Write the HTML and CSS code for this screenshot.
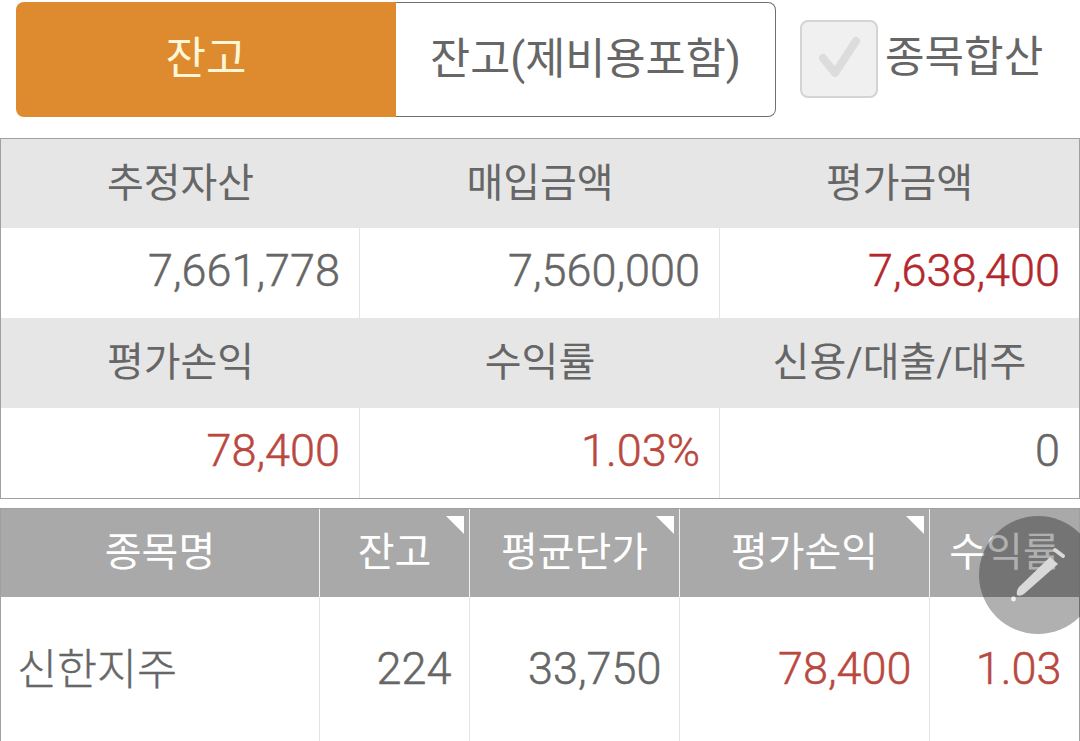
FILE: index.html
```html
<!DOCTYPE html>
<html lang="ko">
<head>
<meta charset="utf-8">
<title>잔고</title>
<link rel="stylesheet" href="styles.css">
</head>
<body>
<main class="page">
  <div class="top">
    <div class="toggle">
      <div class="tab tab-on">잔고</div>
      <div class="tab tab-off">잔고(제비용포함)</div>
    </div>
    <div class="check">
      <span class="box">
        <svg class="tick" viewBox="0 0 78 78" width="78" height="78"><path d="M23 38 L35 53 L56 21" fill="none" stroke="#dcdcdc" stroke-width="8" stroke-linecap="round" stroke-linejoin="round"/></svg>
      </span>
      <span class="check-label">종목합산</span>
    </div>
  </div>

  <section class="summary">
    <div class="s-head">추정자산</div><div class="s-head">매입금액</div><div class="s-head">평가금액</div>
    <div class="s-val">7,661,778</div><div class="s-val">7,560,000</div><div class="s-val red-strong">7,638,400</div>
    <div class="s-head">평가손익</div><div class="s-head">수익률</div><div class="s-head">신용/대출/대주</div>
    <div class="s-val red">78,400</div><div class="s-val red">1.03%</div><div class="s-val">0</div>
  </section>

  <section class="list">
    <div class="l-head">종목명</div>
    <div class="l-head sort">잔고</div>
    <div class="l-head sort">평균단가</div>
    <div class="l-head sort">평가손익</div>
    <div class="l-head">수익률</div>
    <div class="l-cell name">신한지주</div>
    <div class="l-cell">224</div>
    <div class="l-cell">33,750</div>
    <div class="l-cell red">78,400</div>
    <div class="l-cell red">1.03</div>
  </section>

  <div class="fab">
    <svg viewBox="0 0 118 118" width="118" height="118">
      <path d="M71 41 L79 48 L45 78 Q41 81 38 79 Q37 75 40 71 Z" fill="#d9d9d9"/>
      <path d="M76 34 L84 40" fill="none" stroke="#d9d9d9" stroke-width="4" stroke-linecap="round"/>
      <circle cx="34.5" cy="83" r="2.4" fill="#f2f2f2"/>
    </svg>
  </div>
</main>
</body>
</html>
```
FILE: styles.css
```css
* { box-sizing: border-box; }
html, body { margin: 0; padding: 0; background: #fff; }
body { font-family: Roboto, "Noto Sans CJK KR", sans-serif; color: #666; }
.page { position: relative; width: 1080px; height: 741px; overflow: hidden; }

.top { display: flex; align-items: flex-start; height: 138px; padding: 2px 0 0 16px; }
.toggle { display: flex; width: 760px; height: 115px; }
.tab { display: flex; align-items: center; justify-content: center; font-size: 44px; padding-bottom: 10px; }
.tab-on { flex: 0 0 380px; background: #dd8b2e; color: #fff6d8; border-radius: 8px 0 0 8px; }
.tab-off { flex: 1; font-size: 43.6px; border: 1px solid #707070; border-left: 0; border-radius: 0 8px 8px 0; }

.check { display: flex; align-items: flex-start; margin-left: 24px; padding-top: 18px; }
.box { display: block; width: 78px; height: 78px; border: 2px solid #d4d4d4; border-radius: 8px; background: #f0f0f0; }
.tick { display: block; margin: -2px; }
.check-label { font-size: 43px; line-height: 74px; margin-left: 7px; }

.summary { display: grid; grid-template-columns: 359px 360px 1fr; grid-template-rows: 89px 90px 90px 90px; height: 361px; border: 1px solid #a0a0a0; }
.s-head { background: #e6e6e6; display: flex; align-items: center; justify-content: center; font-size: 40px; padding-bottom: 8px; }
.s-val { display: flex; align-items: center; justify-content: flex-end; font-size: 45px; font-weight: 300; -webkit-text-stroke: 0.5px currentColor; padding: 0 19px 6px 0; border-right: 1px solid #e4e4e4; }
.s-val:nth-child(3n) { border-right: 0; }
.red { color: #b9483f; }
.red-strong { color: #b3282c; }

.list { display: grid; grid-template-columns: 319px 150px 210px 250px 1fr; grid-template-rows: 88px 200px; margin-top: 9px; border-top: 1px solid #a0a0a0; border-left: 1px solid #a0a0a0; border-right: 1px solid #a0a0a0; }
.l-head { position: relative; background: #a9a9a9; color: #fff; display: flex; align-items: center; justify-content: center; font-size: 40px; padding-bottom: 8px; border-right: 1px solid #f2f2f2; }
.l-head:nth-child(5) { border-right: 0; }
.sort::after { content: ""; position: absolute; top: 7px; right: 5px; border-style: solid; border-width: 0 18px 18px 0; border-color: transparent #fff transparent transparent; }
.l-cell { display: flex; align-items: flex-start; justify-content: flex-end; font-size: 45px; font-weight: 300; -webkit-text-stroke: 0.5px currentColor; line-height: 52px; padding: 46px 17.5px 0 0; border-right: 1px solid #e4e4e4; }
.l-cell:last-child { border-right: 0; }
.l-cell.name { justify-content: flex-start; font-size: 43.5px; -webkit-text-stroke: 0.4px currentColor; padding: 48px 0 0 16px; }

.fab { position: absolute; left: 979px; top: 516px; width: 118px; height: 118px; border-radius: 50%; background: rgba(0, 0, 0, 0.31); }
.fab svg { display: block; }
```
